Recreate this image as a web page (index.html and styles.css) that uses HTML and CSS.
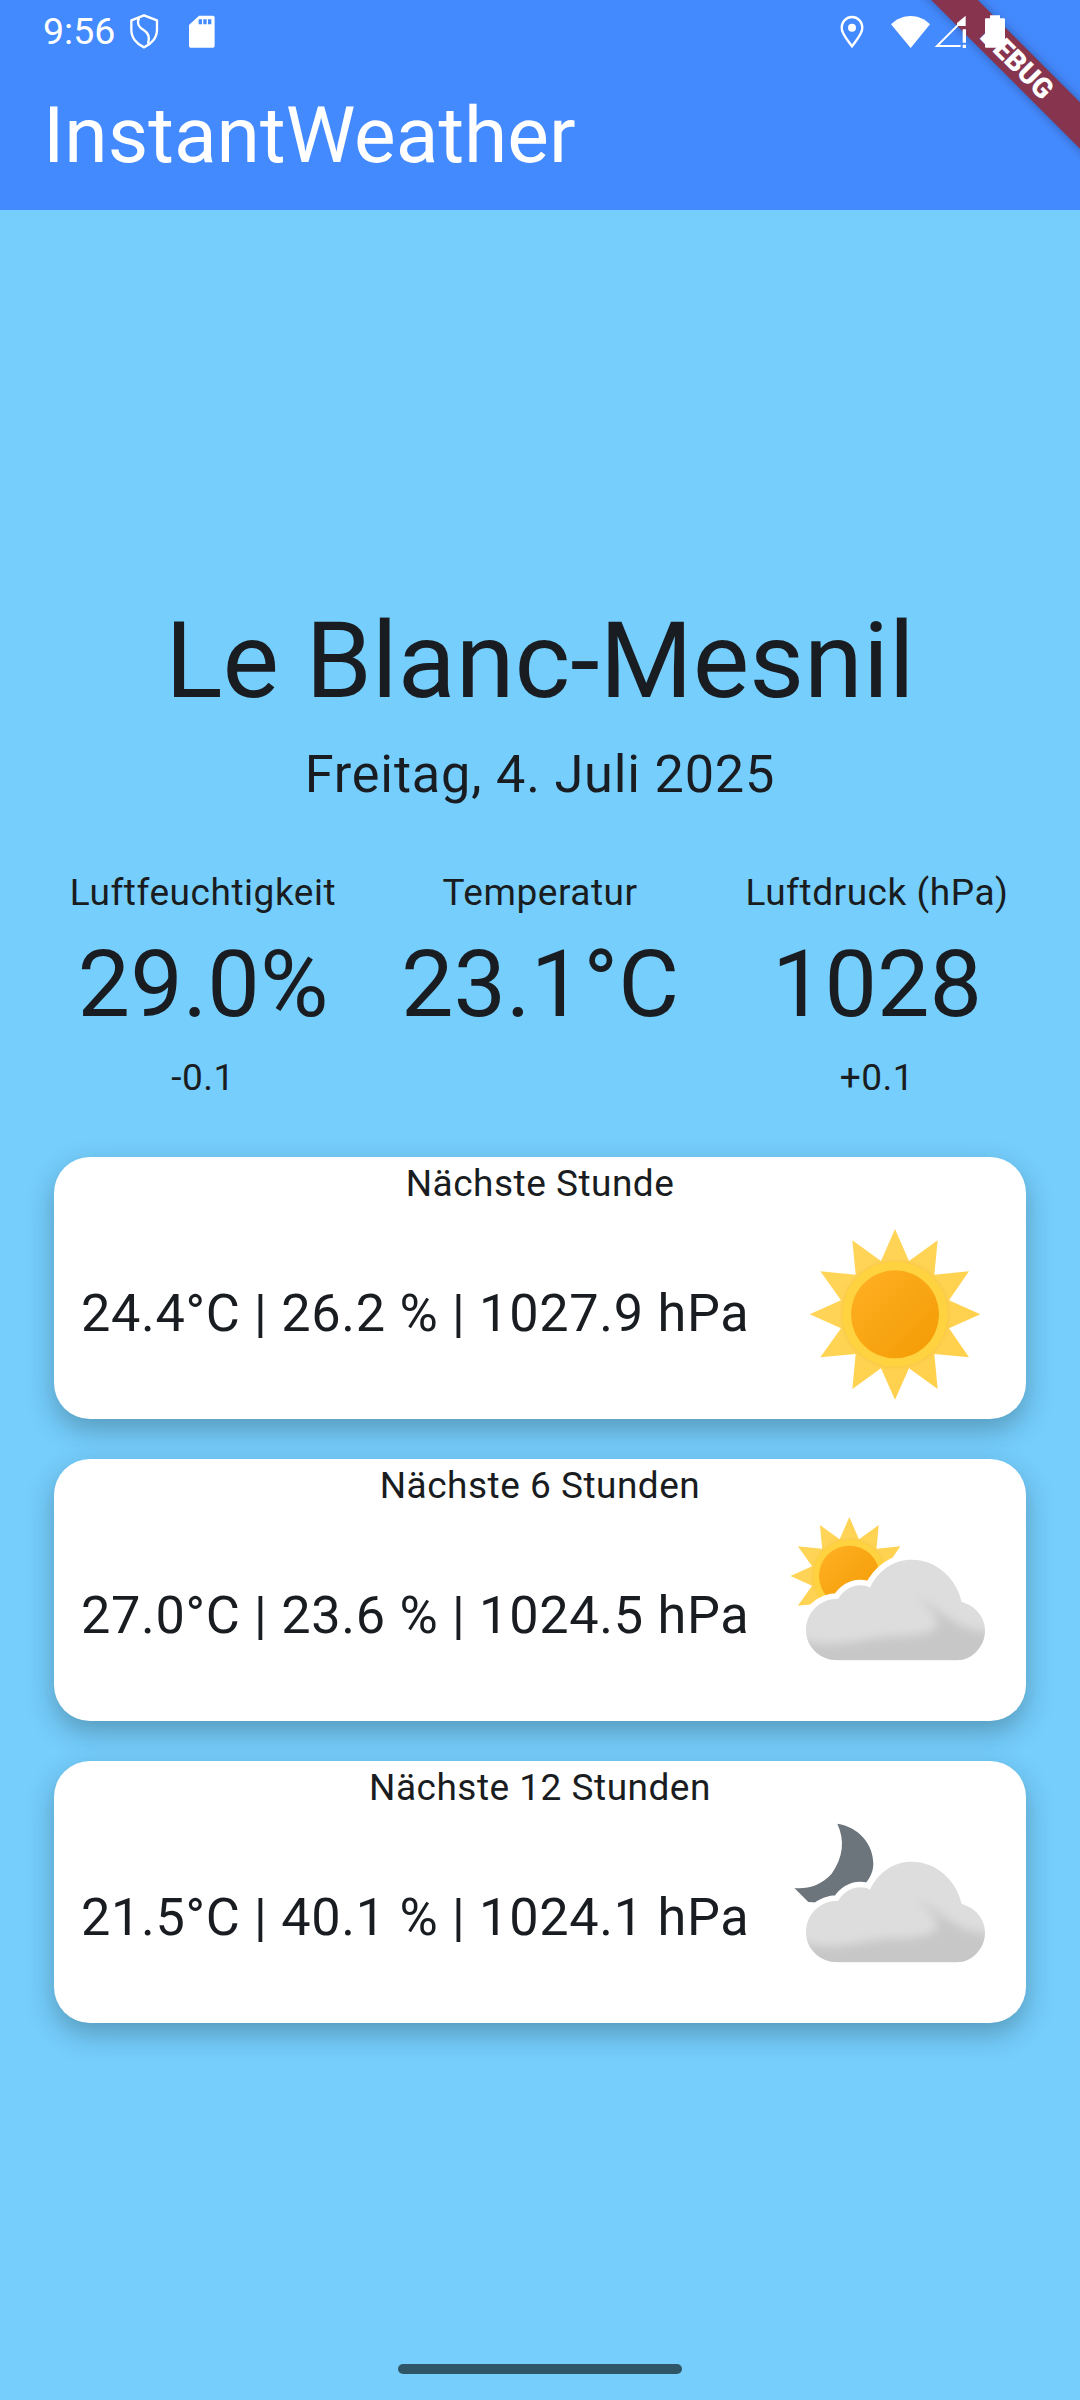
FILE: index.html
```html
<!DOCTYPE html>
<html lang="de">
<head>
<meta charset="utf-8">
<title>InstantWeather</title>
<link rel="stylesheet" href="styles.css">
</head>
<body>
<svg class="defs" width="0" height="0" aria-hidden="true">
  <defs>
    <linearGradient id="ray" x1="0" y1="0" x2="1" y2="1"><stop offset="0" stop-color="#FFD65C"/><stop offset="1" stop-color="#FFCF48"/></linearGradient>
    <linearGradient id="core" x1="0.15" y1="0.15" x2="0.85" y2="0.85"><stop offset="0" stop-color="#FDAD1F"/><stop offset="1" stop-color="#F59E08"/></linearGradient>
    <filter id="soft" x="-20%" y="-20%" width="140%" height="140%"><feGaussianBlur stdDeviation="14"/></filter>
    <filter id="halo" x="-20%" y="-20%" width="140%" height="140%"><feGaussianBlur stdDeviation="5"/></filter>
    <clipPath id="cloudClip"><path d="M235 510C180 510 138 470 138 420C138 365 180 325 235 325C250 300 275 285 300 285C312 285 322 287 330 292C355 240 400 208 455 208C530 208 590 265 605 335C645 345 675 380 675 420C675 470 635 510 590 510Z"/></clipPath>
    <g id="sun">
      <polygon fill="url(#ray)" points="405,86 447,182 533,120 523,223 627,213 567,300 661,342 567,384 627,471 523,461 533,566 447,504 405,598 363,504 277,566 287,461 181,471 243,384 149,342 243,300 181,213 287,223 277,120 363,182"/>
      <circle cx="405" cy="342" r="162" fill="#F3C044" opacity=".55" filter="url(#halo)"/>
      <circle cx="405" cy="342" r="158" fill="#FFD23F"/>
      <circle cx="405" cy="342" r="132" fill="url(#core)"/>
    </g>
    <g id="cloud">
      <path fill="#fff" stroke="#fff" stroke-width="34" stroke-linejoin="round" d="M235 510C180 510 138 470 138 420C138 365 180 325 235 325C250 300 275 285 300 285C312 285 322 287 330 292C355 240 400 208 455 208C530 208 590 265 605 335C645 345 675 380 675 420C675 470 635 510 590 510Z"/>
      <path fill="#DDDDDD" d="M235 510C180 510 138 470 138 420C138 365 180 325 235 325C250 300 275 285 300 285C312 285 322 287 330 292C355 240 400 208 455 208C530 208 590 265 605 335C645 345 675 380 675 420C675 470 635 510 590 510Z"/>
      <g clip-path="url(#cloudClip)">
        <path fill="#C7C7C7" filter="url(#soft)" d="M120 445C180 470 250 462 330 445C420 432 500 445 530 410C545 385 500 350 470 318C520 345 570 395 620 412C650 420 680 425 700 430V540H120Z"/>
      </g>
    </g>
  </defs>
</svg>
<div class="screen">
  <div class="banner"><span class="banner-text">DEBUG</span></div>
  <header class="topbar">
    <div class="status">
      <div class="status-left">
        <span class="clock">9:56</span>
        <svg class="ic ic-shield" viewBox="385 40 96 110"><path d="M433 47L395 62V90C395 115 412 134 433 143C454 134 472 115 472 90V62Z M418 55C410 72 420 85 433 92C446 100 452 112 445 132" fill="none" stroke="#fff" stroke-width="7" stroke-linejoin="round"/></svg>
        <svg class="ic ic-sd" viewBox="565 45 82 100"><path fill="#fff" fill-rule="evenodd" d="M598 47H640Q645 47 645 52V138Q645 143 640 143H573Q568 143 568 138V75ZM597 58V73H607V58ZM611 58V73H621V58ZM625 58V73H635V58Z"/></svg>
      </div>
      <div class="status-right">
        <svg class="ic ic-pin" viewBox="178 42 78 102"><path fill="none" stroke="#fff" stroke-width="7" d="M217 136C200 112 186 98 186 80C186 62 200 48 217 48C234 48 248 62 248 80C248 98 234 112 217 136Z"/><circle cx="217" cy="80" r="12" fill="#fff"/></svg>
        <svg class="ic ic-wifi" viewBox="330 40 123 102"><path fill="#fff" d="M392 139L333 68C350 52 370 43 392 43C414 43 434 52 450 68Z"/></svg>
        <svg class="ic ic-signal" viewBox="458 42 102 102"><path fill="none" stroke="#fff" stroke-width="6" d="M541 135H470L541 64"/><path fill="#fff" d="M530 66L556 44V75H530ZM547 85H557V125H547ZM547 131H557V141H547Z"/></svg>
        <svg class="ic ic-battery" viewBox="612 42 66 100"><path fill="#fff" d="M630 43H660V52H672Q675 52 675 55V137Q675 140 672 140H618Q615 140 615 137V55Q615 52 618 52H630Z"/></svg>
      </div>
    </div>
    <div class="appbar">InstantWeather</div>
  </header>
  <main class="content">
    <h1 class="city">Le Blanc-Mesnil</h1>
    <p class="date">Freitag, 4. Juli 2025</p>
    <section class="stats">
      <div class="stat"><span class="stat-label">Luftfeuchtigkeit</span><span class="stat-value">29.0%</span><span class="stat-delta">-0.1</span></div>
      <div class="stat"><span class="stat-label">Temperatur</span><span class="stat-value">23.1°C</span><span class="stat-delta">&nbsp;</span></div>
      <div class="stat"><span class="stat-label">Luftdruck (hPa)</span><span class="stat-value">1028</span><span class="stat-delta">+0.1</span></div>
    </section>
    <section class="cards">
      <article class="card">
        <h2 class="card-title">Nächste Stunde</h2>
        <div class="card-row">
          <span class="card-data">24.4°C | 26.2 % | 1027.9 hPa</span>
          <svg class="weather" viewBox="0 26 780 630"><use href="#sun"/></svg>
        </div>
      </article>
      <article class="card">
        <h2 class="card-title">Nächste 6 Stunden</h2>
        <div class="card-row">
          <span class="card-data">27.0°C | 23.6 % | 1024.5 hPa</span>
          <svg class="weather" viewBox="0 62 780 630"><g transform="translate(268 257) scale(.69) translate(-405 -342)"><use href="#sun"/></g><use href="#cloud"/></svg>
        </div>
      </article>
      <article class="card">
        <h2 class="card-title">Nächste 12 Stunden</h2>
        <div class="card-row">
          <span class="card-data">21.5°C | 40.1 % | 1024.1 hPa</span>
          <svg class="weather" viewBox="0 68 780 630"><path fill="#6C747C" d="M232 100C295 110 340 160 340 220C340 290 250 345 145 335L103 293C140 297 185 285 215 250C250 200 255 150 232 100Z"/><g transform="translate(0 6)"><use href="#cloud"/></g></svg>
        </div>
      </article>
    </section>
  </main>
  <div class="home-pill"></div>
</div>
</body>
</html>
```

FILE: styles.css
```css
* { box-sizing: border-box; }
html, body { margin: 0; padding: 0; }
body { font-family: Roboto, "Liberation Sans", sans-serif; color: #191C20; }
.defs { position: absolute; }
.screen { position: relative; width: 1080px; height: 2400px; overflow: hidden; background: #75CEFC; display: flex; flex-direction: column; }
.topbar { background: #448AFF; color: #fff; height: 210px; flex: none; position: relative; }
.status { position: relative; z-index: 3; height: 63px; display: flex; justify-content: space-between; align-items: center; padding: 0 74px 0 43px; }
.status-left, .status-right { display: flex; align-items: center; }
.clock { font-size: 37.5px; line-height: 1; width: 85px; }
.ic { display: block; flex: none; }
.ic-shield { width: 32px; height: 36.7px; margin-right: 28px; }
.ic-sd { width: 27.3px; height: 33.3px; }
.ic-pin { width: 26px; height: 34px; margin-right: 24.7px; }
.ic-wifi { width: 41px; height: 34px; margin-right: 1.7px; }
.ic-signal { width: 34px; height: 34px; margin-right: 17.3px; }
.ic-battery { width: 22px; height: 33.3px; }
.appbar { font-size: 78.5px; line-height: 100px; padding: 22px 0 0 43px; }
.banner { position: absolute; z-index: 2; left: 865px; top: 44px; width: 300px; height: 33px; transform: rotate(45deg); background-color: #87344F; box-shadow: 0 0 12px rgba(0, 0, 0, .3); color: #fff; display: flex; align-items: center; justify-content: center; }
.banner-text { font-size: 28px; font-weight: 900; line-height: 33px; margin-left: 6px; }
.content { flex: 1; display: flex; flex-direction: column; justify-content: center; padding-top: 16px; }
.city { margin: 0; font-weight: 400; font-size: 106.5px; line-height: 116px; text-align: center; }
.date { margin: 23.5px 0 0; font-size: 52.25px; line-height: 66px; text-align: center; letter-spacing: .8px; }
.stats { display: grid; grid-template-columns: repeat(3, 337px); justify-content: center; margin-top: 60.5px; }
.stat { display: flex; flex-direction: column; align-items: center; }
.stat-label { font-size: 37px; line-height: 48px; letter-spacing: .55px; }
.stat-value { font-size: 93.5px; line-height: 112px; margin-top: 11px; }
.stat-delta { font-size: 37px; line-height: 48px; margin-top: 14.5px; letter-spacing: .5px; }
.cards { display: flex; flex-direction: column; gap: 40px; margin: 55px 54px 0; }
.card { background: #fff; border-radius: 36px; height: 262px; box-shadow: 0 11px 28px rgba(0, 0, 0, .26); display: flex; flex-direction: column; }
.card-title { margin: 2px 0 0; font-weight: 400; font-size: 37px; line-height: 50px; text-align: center; letter-spacing: .5px; flex: none; }
.card-row { flex: 1; display: flex; justify-content: space-between; align-items: center; padding: 0 6px 0 27px; }
.card-data { font-size: 52.25px; line-height: 64px; letter-spacing: .68px; white-space: nowrap; }
.weather { display: block; width: 260px; height: 210px; flex: none; }
.home-pill { position: absolute; left: 398px; top: 2364px; width: 284px; height: 10px; border-radius: 5px; background: #2F5667; }
```
